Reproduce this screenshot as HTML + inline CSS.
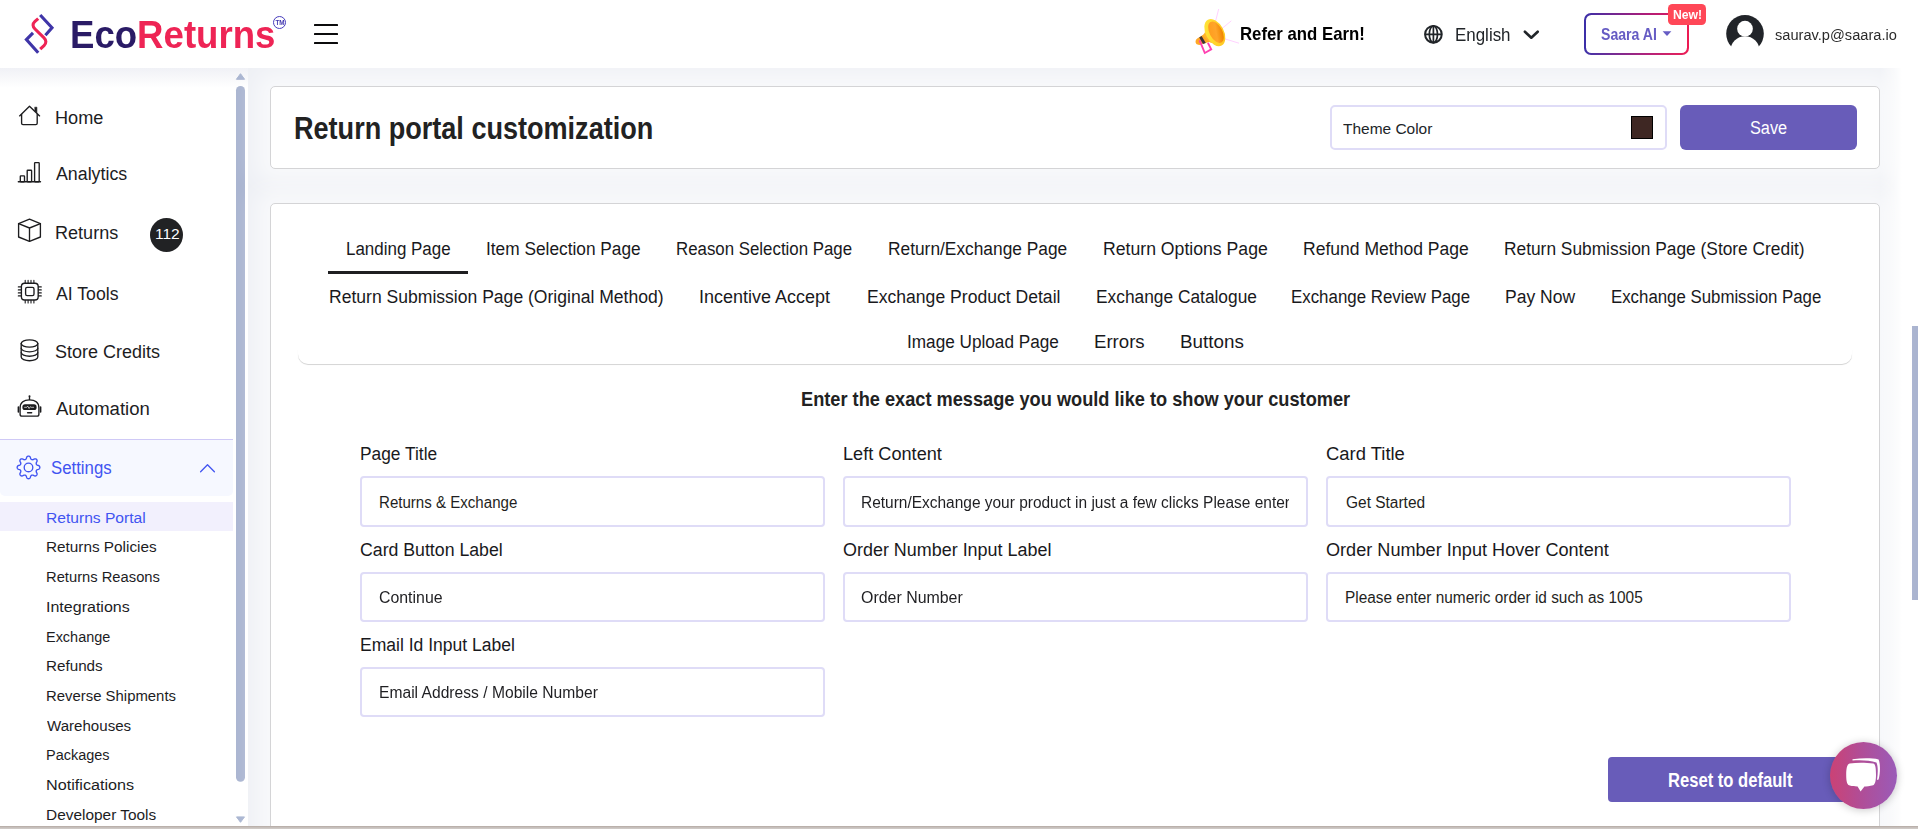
<!DOCTYPE html><html lang="en"><head><meta charset="utf-8"><title>EcoReturns</title><style>
*{margin:0;padding:0;box-sizing:border-box}
html,body{width:1918px;height:829px;overflow:hidden;background:#fff;font-family:"Liberation Sans", sans-serif;}
.a{position:absolute}
.t{position:absolute;white-space:nowrap;line-height:1;transform-origin:0 0;}
#main{left:248px;top:68px;width:1670px;height:761px;background:#eef0f5}
.card{background:#fff;border:1px solid #d4d4d6;border-radius:5px;box-shadow:0 0 22px 14px rgba(255,255,255,.6)}
.inp{border:2px solid #dfdcf7;border-radius:4px;background:#fff;height:50px;width:465px}
</style></head><body><div id="root" style="position:relative;width:1918px;height:829px;overflow:hidden">
<div id="main" class="a"></div>
<div class="a" style="left:1880px;top:68px;width:38px;height:761px;background:linear-gradient(90deg,rgba(255,255,255,0),#fff 58%)"></div>
<div class="a" style="left:1912.4px;top:325.6px;width:6px;height:274.7px;background:#aab4d0"></div>
<div class="a" style="left:0;top:68px;width:248px;height:761px;background:#fff"></div>
<div class="a" style="left:0;top:68px;width:248px;height:20px;background:linear-gradient(#f0f1f6,#fff)"></div>
<svg class="a" style="left:234px;top:70px" width="14" height="758" viewBox="234 70 14 758"><path d="M240.5 73.7 L244.6 79.3 L236.4 79.3 Z" fill="#a9b5d1" stroke="#a9b5d1" stroke-width="1" stroke-linejoin="round"/><rect x="236" y="86" width="9" height="695.8" rx="4.5" fill="#aab5d1"/><path d="M236.5 816.9 L244.5 816.9 L240.5 822.3 Z" fill="#a9b5d1" stroke="#a9b5d1" stroke-width="1" stroke-linejoin="round"/></svg>
<div class="a" style="left:0;top:439px;width:233px;height:1px;background:#cfc9f6"></div>
<div class="a" style="left:0;top:440px;width:233px;height:56px;background:#f6f8ff;border-radius:0 0 5px 5px"></div>
<div class="a" style="left:0;top:502px;width:233px;height:29px;background:#f2f0fd"></div>
<svg class="a" style="left:0;top:68px" width="234" height="440" viewBox="0 68 234 440" fill="none" stroke="#1d1d1f" stroke-width="1.35" stroke-linecap="round" stroke-linejoin="round">
<path d="M19.6 115.9 L29.5 106.2 L39.6 115.9"/><path d="M21.6 114.3 V123.2 Q21.6 124.6 23 124.6 H35.8 Q37.2 124.6 37.2 123.2 V114.3"/><path d="M35 107.2 h1.9 v5.6 l-1.9 -1.9 Z" fill="#1d1d1f" stroke-width="0.6"/>
<path d="M18.3 181.7 H40.5"/><rect x="20.3" y="175.9" width="4.2" height="5.8" rx="0.6"/><rect x="27.2" y="170.2" width="4.4" height="11.5" rx="0.6"/><rect x="34.6" y="162.6" width="4.6" height="19.1" rx="0.6"/>
<path d="M29.5 219.2 L40.4 223.6 V237 L29.5 241.3 L18.6 237 V223.6 Z"/><path d="M18.6 223.6 L29.5 228 L40.4 223.6 M29.5 228 V241.3"/>
<rect x="21.4" y="283.2" width="16.8" height="16.8" rx="3.2"/><rect x="25.6" y="287.3" width="8.4" height="8.4" rx="1.6"/>
<path d="M25.2 280.2 V283 M25.2 300.2 V303 M28.1 280.2 V283 M28.1 300.2 V303 M31.0 280.2 V283 M31.0 300.2 V303 M33.9 280.2 V283 M33.9 300.2 V303 M18.3 286.9 H21.2 M38.4 286.9 H41.3 M18.3 289.9 H21.2 M38.4 289.9 H41.3 M18.3 292.9 H21.2 M38.4 292.9 H41.3 M18.3 295.9 H21.2 M38.4 295.9 H41.3 " stroke-width="1.1"/>
<ellipse cx="29.5" cy="343.5" rx="8.3" ry="3.6"/><path d="M21.2 343.5 V357 C21.2 359 24.9 360.7 29.5 360.7 S37.8 359 37.8 357 V343.5"/><path d="M21.2 348.2 C21.2 350.2 24.9 351.8 29.5 351.8 S37.8 350.2 37.8 348.2 M21.2 352.6 C21.2 354.6 24.9 356.2 29.5 356.2 S37.8 354.6 37.8 352.6"/>
<circle cx="29.5" cy="396.3" r="1" fill="#1d1d1f" stroke="none"/><path d="M29.5 397 V399.6"/><path d="M20.1 414.2 V408 C20.1 402.6 24 399.8 29.5 399.8 S38.9 402.6 38.9 408 V414.2 Q38.9 416.1 37 416.1 H22 Q20.1 416.1 20.1 414.2 Z"/><rect x="22.4" y="404.3" width="14.2" height="5.8" rx="2.6" fill="#1d1d1f" stroke="none"/><path d="M24.6 407.3 h2.2 l0.9 -1.2 l1.4 2.4 l1.2 -1.8 l0.8 0.6 h2.6" stroke="#fff" stroke-width="0.7"/><path d="M27.6 412.7 H31.6" stroke-width="1.5"/><path d="M18.4 407 V412 M40.6 407 V412" stroke-width="1.6"/>
<path d="M28.50 456.05 L28.94 456.10 L29.38 456.26 L29.79 456.52 L30.16 456.91 L30.43 457.69 L30.64 458.47 L30.90 458.89 L31.16 459.20 L31.44 459.43 L31.73 459.59 L32.06 459.69 L32.41 459.72 L32.82 459.68 L33.30 459.57 L34.00 459.17 L34.74 458.81 L35.28 458.80 L35.76 458.90 L36.18 459.10 L36.53 459.37 L36.80 459.72 L37.00 460.14 L37.10 460.62 L37.09 461.16 L36.73 461.90 L36.33 462.60 L36.22 463.08 L36.18 463.49 L36.21 463.84 L36.31 464.17 L36.47 464.46 L36.70 464.74 L37.01 465.00 L37.43 465.26 L38.21 465.47 L38.99 465.74 L39.38 466.11 L39.64 466.52 L39.80 466.96 L39.85 467.40 L39.80 467.84 L39.64 468.28 L39.38 468.69 L38.99 469.06 L38.21 469.33 L37.43 469.54 L37.01 469.80 L36.70 470.06 L36.47 470.34 L36.31 470.63 L36.21 470.96 L36.18 471.31 L36.22 471.72 L36.33 472.20 L36.73 472.90 L37.09 473.64 L37.10 474.18 L37.00 474.66 L36.80 475.08 L36.53 475.43 L36.18 475.70 L35.76 475.90 L35.28 476.00 L34.74 475.99 L34.00 475.63 L33.30 475.23 L32.82 475.12 L32.41 475.08 L32.06 475.11 L31.73 475.21 L31.44 475.37 L31.16 475.60 L30.90 475.91 L30.64 476.33 L30.43 477.11 L30.16 477.89 L29.79 478.28 L29.38 478.54 L28.94 478.70 L28.50 478.75 L28.06 478.70 L27.62 478.54 L27.21 478.28 L26.84 477.89 L26.57 477.11 L26.36 476.33 L26.10 475.91 L25.84 475.60 L25.56 475.37 L25.27 475.21 L24.94 475.11 L24.59 475.08 L24.18 475.12 L23.70 475.23 L23.00 475.63 L22.26 475.99 L21.72 476.00 L21.24 475.90 L20.82 475.70 L20.47 475.43 L20.20 475.08 L20.00 474.66 L19.90 474.18 L19.91 473.64 L20.27 472.90 L20.67 472.20 L20.78 471.72 L20.82 471.31 L20.79 470.96 L20.69 470.63 L20.53 470.34 L20.30 470.06 L19.99 469.80 L19.57 469.54 L18.79 469.33 L18.01 469.06 L17.62 468.69 L17.36 468.28 L17.20 467.84 L17.15 467.40 L17.20 466.96 L17.36 466.52 L17.62 466.11 L18.01 465.74 L18.79 465.47 L19.57 465.26 L19.99 465.00 L20.30 464.74 L20.53 464.46 L20.69 464.17 L20.79 463.84 L20.82 463.49 L20.78 463.08 L20.67 462.60 L20.27 461.90 L19.91 461.16 L19.90 460.62 L20.00 460.14 L20.20 459.72 L20.47 459.37 L20.82 459.10 L21.24 458.90 L21.72 458.80 L22.26 458.81 L23.00 459.17 L23.70 459.57 L24.18 459.68 L24.59 459.72 L24.94 459.69 L25.27 459.59 L25.56 459.43 L25.84 459.20 L26.10 458.89 L26.36 458.47 L26.57 457.69 L26.84 456.91 L27.21 456.52 L27.62 456.26 L28.06 456.10 Z" stroke="#4154f1" stroke-width="1.35"/><circle cx="28.5" cy="467.4" r="4.3" stroke="#4154f1" stroke-width="1.35"/>
<path d="M200.6 471.8 L207.5 464.8 L214.4 471.8" stroke="#4154f1" stroke-width="1.3"/>
</svg>
<div class="a" style="left:150px;top:218px;width:33px;height:34px;border-radius:50%;background:#212224"></div>
<div class="a" style="left:0;top:0;width:1918px;height:68px;background:#fff"></div>
<svg class="a" style="left:16px;top:6px" width="60" height="56" viewBox="16 6 60 56" fill="none" stroke-width="3.1" stroke-linejoin="miter"><path d="M40.2 15 L52 27.8 L45.4 35.2" stroke="#3f35a8"/><path d="M33 32.8 L26.4 39.6 L38.2 52.8" stroke="#3f35a8"/><path d="M38.2 18.6 L35 21.4 C32.2 24 32.6 26.6 35 29 L43.8 37.6 C46.4 40.2 46.6 43 44 45.6 L40.2 49.2" stroke="#ee2455"/></svg>
<div class="a" style="left:272.5px;top:15.7px;width:13.6px;height:13.6px;border-radius:50%;border:1.2px solid #483dbd"></div>
<div class="a" style="left:314px;top:24px;width:24px;height:2px;background:#0b0b0c;border-radius:0.6px"></div>
<div class="a" style="left:314px;top:33px;width:24px;height:2px;background:#0b0b0c;border-radius:0.6px"></div>
<div class="a" style="left:314px;top:42px;width:24px;height:2px;background:#0b0b0c;border-radius:0.6px"></div>
<svg class="a" style="left:1185px;top:0" width="60" height="65" viewBox="1185 0 60 65"><defs><linearGradient id="mg1" x1="0" y1="0" x2="1" y2="1"><stop offset="0" stop-color="#ffe93b"/><stop offset="1" stop-color="#ffc21f"/></linearGradient><linearGradient id="mg2" x1="0" y1="0" x2="1" y2="0.6"><stop offset="0" stop-color="#ff9a1a"/><stop offset="0.6" stop-color="#ffa52a"/><stop offset="1" stop-color="#f08400"/></linearGradient></defs><path d="M1215.6 21.2 L1218.7 9 M1221.9 28.6 L1231.3 20.8 M1224.6 38.8 L1239 43.2" stroke="#ffd2ff" stroke-width="1" fill="none"/><path d="M1206 33 L1197.6 38.2 C1194.8 40 1195 43.6 1197.6 44.6 C1199.2 45.2 1200.6 44.8 1202 44 L1213 41 Z" fill="#ffa726"/><path d="M1199.2 37.4 L1201.6 36 L1205.8 43 L1203 44 Z" fill="#3a3238"/><path d="M1199.6 40.4 L1204.8 53 L1211.2 49.4 L1207.9 42.8" stroke="#ff3eb0" stroke-width="1.9" fill="none" stroke-linejoin="miter"/><path d="M1203 35.5 L1207.5 28 L1219 44.5 L1210 42.5 Z" fill="#ffb52e"/><ellipse cx="1214.8" cy="32.6" rx="9" ry="14.6" transform="rotate(-28 1214.8 32.6)" fill="url(#mg1)"/><ellipse cx="1216" cy="32.2" rx="6.4" ry="11.6" transform="rotate(-28 1216 32.2)" fill="url(#mg2)"/></svg>
<svg class="a" style="left:1422px;top:22px" width="24" height="24" viewBox="1422 22 24 24" fill="none" stroke="#212529" stroke-width="2"><circle cx="1433.4" cy="34.3" r="8.35"/><ellipse cx="1433.4" cy="34.3" rx="4.1" ry="8.35" stroke-width="1.7"/><path d="M1425 34.3 H1441.8 M1433.4 26 V42.6" stroke-width="1.7"/></svg>
<svg class="a" style="left:1520px;top:26px" width="24" height="18" viewBox="1520 26 24 18" fill="none" stroke="#212529" stroke-width="2.6" stroke-linecap="round" stroke-linejoin="round"><path d="M1524.9 31.7 L1531.3 37.7 L1537.7 31.7"/></svg>
<div class="a" style="left:1584px;top:13.4px;width:105px;height:41.2px;border-radius:7px;background:linear-gradient(90deg,#3a2fa8,#b01d78 60%,#ee1a52)"></div>
<div class="a" style="left:1585.8px;top:15.2px;width:101.4px;height:37.6px;border-radius:5.4px;background:#fff"></div>
<svg class="a" style="left:1660px;top:28px" width="14" height="10" viewBox="1660 28 14 10"><path d="M1662.6 31.3 H1671.4 L1667 35.9 Z" fill="#665cc4"/></svg>
<div class="a" style="left:1668px;top:4px;width:38px;height:20.6px;border-radius:4.5px;background:#ff4757"></div>
<svg class="a" style="left:1724px;top:12px" width="44" height="44" viewBox="1724 12 44 44"><defs><clipPath id="avc"><circle cx="1745" cy="33.8" r="18.8"/></clipPath></defs><circle cx="1745" cy="33.8" r="18.8" fill="#212429"/><circle cx="1745" cy="28.7" r="7.85" fill="#fff"/><ellipse cx="1745" cy="50.9" rx="14.6" ry="14.7" fill="#fff"/></svg>
<div class="a card" style="left:270px;top:86px;width:1610px;height:83px"></div>
<div class="a card" style="left:270px;top:203px;width:1610px;height:640px"></div>
<div class="a" style="left:1330px;top:105px;width:337px;height:45px;border:2px solid #dfdcf7;border-radius:5px;background:#fff"></div>
<div class="a" style="left:1631px;top:116px;width:22px;height:23px;background:#3e2723;border:1px solid #000"></div>
<div class="a" style="left:1680px;top:105px;width:177px;height:45px;border-radius:6px;background:#685cb9"></div>
<div class="a" style="left:298px;top:222px;width:1554px;height:142.4px;border-radius:10px;background:#fff;box-shadow:0 1px 0.7px rgba(0,0,0,.17)"></div>
<div class="a" style="left:296px;top:210px;width:1558px;height:140px;background:#fff"></div>
<div class="a" style="left:328px;top:271px;width:140px;height:3px;background:#1f1f21"></div>
<div class="a inp" style="left:360px;top:476px;height:51px;width:465px"></div>
<div class="a inp" style="left:843px;top:476px;height:51px;width:465px"></div>
<div class="a inp" style="left:1326px;top:476px;height:51px;width:465px"></div>
<div class="a inp" style="left:360px;top:572px;height:50px;width:465px"></div>
<div class="a inp" style="left:843px;top:572px;height:50px;width:465px"></div>
<div class="a inp" style="left:1326px;top:572px;height:50px;width:465px"></div>
<div class="a inp" style="left:360px;top:667px;height:50px;width:465px"></div>
<div class="a" style="left:1608px;top:757px;width:249px;height:45px;border-radius:4px;background:#685cb9"></div>
<div class="a" style="left:1830px;top:742px;width:67px;height:67px;border-radius:50%;background:linear-gradient(90deg,#cb4275,#b14d96 45%,#9a5bb8);box-shadow:0 1px 8px rgba(0,0,0,.22)"></div>
<svg class="a" style="left:1840px;top:752px" width="48" height="46" viewBox="1840 752 48 46"><path d="M1852.5 759.2 C1862 758 1872 758 1878.6 759.4 C1880.2 763 1880.6 772 1878.6 779.4 L1877 780 C1878.2 772 1878 766 1876.4 762.6 C1870 760.4 1861 760 1852.5 760.6 Z" fill="#fff"/><path d="M1849.6 763.4 C1857 762.4 1866 762.4 1873.2 763.6 C1875.6 764 1876 769 1876 774.6 C1876 780 1875.4 784.4 1873.2 785.2 C1870 786.2 1866 786.4 1864.4 786.4 L1860.6 791.4 L1857.6 786.4 C1854 786.4 1851 786 1849 785.2 C1846.6 784.2 1846.2 779 1846.2 774.4 C1846.2 769.4 1846.8 764 1849.6 763.4 Z" fill="#fff"/></svg>
<div class="a" style="left:0;top:826px;width:1918px;height:3px;background:linear-gradient(#b4a9a3,#c6bfbb 50%,#d2cdca)"></div>
<div class="a" id="hdrtxt" style="left:0;top:0;width:1918px;height:68px;will-change:transform">
<div class="t" id="t0" style="left:69.52px;top:16.00px;font-size:38.8px;font-weight:700;color:#2a1b66;transform:scaleX(0.9433);">Eco<span style="color:#ee2455">Returns</span></div>
<div class="t" id="t1" style="left:1240.02px;top:24.00px;font-size:19px;font-weight:700;color:#000;transform:scaleX(0.8828);">Refer and Earn!</div>
<div class="t" id="t2" style="left:1454.54px;top:26.00px;font-size:18px;font-weight:400;color:#212529;transform:scaleX(0.9405);">English</div>
<div class="t" id="t3" style="left:1600.80px;top:27.00px;font-size:16px;font-weight:700;color:#665cc4;transform:scaleX(0.8794);">Saara AI</div>
<div class="t" id="t4" style="left:1673.38px;top:9.00px;font-size:12.8px;font-weight:700;color:#fff;transform:scaleX(0.9525);">New!</div>
<div class="t" id="t5" style="left:1774.70px;top:27.00px;font-size:15.4px;font-weight:400;color:#2b2b2b;transform:scaleX(0.9500);">saurav.p@saara.io</div>
<div class="t" id="t6" style="left:275.50px;top:20.00px;font-size:6.3px;font-weight:700;color:#4338b0;transform:scaleX(1.0000);">TM</div>
</div>
<div class="t" id="t7" style="left:55.49px;top:110.00px;font-size:17.6px;font-weight:400;color:#1d1d1f;transform:scaleX(1.0306);">Home</div>
<div class="t" id="t8" style="left:55.50px;top:166.00px;font-size:17.6px;font-weight:400;color:#1d1d1f;transform:scaleX(1.0114);">Analytics</div>
<div class="t" id="t9" style="left:55.47px;top:225.00px;font-size:17.6px;font-weight:400;color:#1d1d1f;transform:scaleX(1.0267);">Returns</div>
<div class="t" id="t10" style="left:55.50px;top:286.00px;font-size:17.6px;font-weight:400;color:#1d1d1f;transform:scaleX(1.0033);">AI Tools</div>
<div class="t" id="t11" style="left:55.48px;top:344.00px;font-size:17.6px;font-weight:400;color:#1d1d1f;transform:scaleX(1.0238);">Store Credits</div>
<div class="t" id="t12" style="left:55.50px;top:401.00px;font-size:17.6px;font-weight:400;color:#1d1d1f;transform:scaleX(1.0545);">Automation</div>
<div class="t" id="t13" style="left:154.87px;top:227.00px;font-size:14.4px;font-weight:400;color:#fff;transform:scaleX(1.0787);">112</div>
<div class="t" id="t14" style="left:50.75px;top:460.00px;font-size:17.6px;font-weight:400;color:#4154f1;transform:scaleX(0.9532);">Settings</div>
<div class="t" id="t15" style="left:45.67px;top:510.00px;font-size:15.2px;font-weight:400;color:#4154f1;transform:scaleX(1.0271);">Returns Portal</div>
<div class="t" id="t16" style="left:45.70px;top:539.00px;font-size:15.2px;font-weight:400;color:#1d1d1f;transform:scaleX(1.0083);">Returns Policies</div>
<div class="t" id="t17" style="left:45.72px;top:569.00px;font-size:15.2px;font-weight:400;color:#1d1d1f;transform:scaleX(0.9707);">Returns Reasons</div>
<div class="t" id="t18" style="left:45.64px;top:599.00px;font-size:15.2px;font-weight:400;color:#1d1d1f;transform:scaleX(1.0551);">Integrations</div>
<div class="t" id="t19" style="left:45.73px;top:629.00px;font-size:15.2px;font-weight:400;color:#1d1d1f;transform:scaleX(0.9516);">Exchange</div>
<div class="t" id="t20" style="left:45.70px;top:658.00px;font-size:15.2px;font-weight:400;color:#1d1d1f;transform:scaleX(1.0018);">Refunds</div>
<div class="t" id="t21" style="left:45.71px;top:688.00px;font-size:15.2px;font-weight:400;color:#1d1d1f;transform:scaleX(0.9809);">Reverse Shipments</div>
<div class="t" id="t22" style="left:46.70px;top:718.00px;font-size:15.2px;font-weight:400;color:#1d1d1f;transform:scaleX(0.9929);">Warehouses</div>
<div class="t" id="t23" style="left:45.75px;top:747.00px;font-size:15.2px;font-weight:400;color:#1d1d1f;transform:scaleX(0.9523);">Packages</div>
<div class="t" id="t24" style="left:45.63px;top:777.00px;font-size:15.2px;font-weight:400;color:#1d1d1f;transform:scaleX(1.0659);">Notifications</div>
<div class="t" id="t25" style="left:45.68px;top:807.00px;font-size:15.2px;font-weight:400;color:#1d1d1f;transform:scaleX(1.0150);">Developer Tools</div>
<div class="t" id="t26" style="left:293.73px;top:113.00px;font-size:30.6px;font-weight:700;color:#222;transform:scaleX(0.8844);">Return portal customization</div>
<div class="t" id="t27" style="left:1343.40px;top:121.00px;font-size:15.4px;font-weight:400;color:#212529;transform:scaleX(1.0045);">Theme Color</div>
<div class="t" id="t28" style="left:1749.80px;top:119.00px;font-size:18px;font-weight:400;color:#fff;transform:scaleX(0.9050);">Save</div>
<div class="t" id="t29" style="left:345.94px;top:241.00px;font-size:17.6px;font-weight:400;color:#19191c;transform:scaleX(0.9636);">Landing Page</div>
<div class="t" id="t30" style="left:486.12px;top:241.00px;font-size:17.6px;font-weight:400;color:#19191c;transform:scaleX(0.9821);">Item Selection Page</div>
<div class="t" id="t31" style="left:676.04px;top:241.00px;font-size:17.6px;font-weight:400;color:#19191c;transform:scaleX(0.9577);">Reason Selection Page</div>
<div class="t" id="t32" style="left:888.01px;top:241.00px;font-size:17.6px;font-weight:400;color:#19191c;transform:scaleX(0.9851);">Return/Exchange Page</div>
<div class="t" id="t33" style="left:1102.80px;top:241.00px;font-size:17.6px;font-weight:400;color:#19191c;transform:scaleX(1.0031);">Return Options Page</div>
<div class="t" id="t34" style="left:1302.80px;top:241.00px;font-size:17.6px;font-weight:400;color:#19191c;transform:scaleX(0.9970);">Refund Method Page</div>
<div class="t" id="t35" style="left:1503.81px;top:241.00px;font-size:17.6px;font-weight:400;color:#19191c;transform:scaleX(0.9852);">Return Submission Page (Store Credit)</div>
<div class="t" id="t36" style="left:328.51px;top:289.00px;font-size:17.6px;font-weight:400;color:#19191c;transform:scaleX(0.9976);">Return Submission Page (Original Method)</div>
<div class="t" id="t37" style="left:699.47px;top:289.00px;font-size:17.6px;font-weight:400;color:#19191c;transform:scaleX(1.0221);">Incentive Accept</div>
<div class="t" id="t38" style="left:866.50px;top:289.00px;font-size:17.6px;font-weight:400;color:#19191c;transform:scaleX(0.9990);">Exchange Product Detail</div>
<div class="t" id="t39" style="left:1096.02px;top:289.00px;font-size:17.6px;font-weight:400;color:#19191c;transform:scaleX(0.9852);">Exchange Catalogue</div>
<div class="t" id="t40" style="left:1290.54px;top:289.00px;font-size:17.6px;font-weight:400;color:#19191c;transform:scaleX(0.9589);">Exchange Review Page</div>
<div class="t" id="t41" style="left:1504.52px;top:289.00px;font-size:17.6px;font-weight:400;color:#19191c;transform:scaleX(0.9973);">Pay Now</div>
<div class="t" id="t42" style="left:1611.04px;top:289.00px;font-size:17.6px;font-weight:400;color:#19191c;transform:scaleX(0.9557);">Exchange Submission Page</div>
<div class="t" id="t43" style="left:906.53px;top:334.00px;font-size:17.6px;font-weight:400;color:#19191c;transform:scaleX(0.9766);">Image Upload Page</div>
<div class="t" id="t44" style="left:1093.96px;top:334.00px;font-size:17.6px;font-weight:400;color:#19191c;transform:scaleX(1.0578);">Errors</div>
<div class="t" id="t45" style="left:1179.83px;top:334.00px;font-size:17.6px;font-weight:400;color:#19191c;transform:scaleX(1.0690);">Buttons</div>
<div class="t" id="t46" style="left:800.81px;top:389.00px;font-size:20.4px;font-weight:700;color:#222;transform:scaleX(0.8925);">Enter the exact message you would like to show your customer</div>
<div class="t" id="t47" style="left:360.41px;top:446.00px;font-size:17.6px;font-weight:400;color:#19191c;transform:scaleX(0.9857);">Page Title</div>
<div class="t" id="t48" style="left:843.27px;top:446.00px;font-size:17.6px;font-weight:400;color:#19191c;transform:scaleX(1.0316);">Left Content</div>
<div class="t" id="t49" style="left:1326.27px;top:446.00px;font-size:17.6px;font-weight:400;color:#19191c;transform:scaleX(1.0474);">Card Title</div>
<div class="t" id="t50" style="left:360.39px;top:542.00px;font-size:17.6px;font-weight:400;color:#19191c;transform:scaleX(1.0064);">Card Button Label</div>
<div class="t" id="t51" style="left:843.28px;top:542.00px;font-size:17.6px;font-weight:400;color:#19191c;transform:scaleX(1.0197);">Order Number Input Label</div>
<div class="t" id="t52" style="left:1326.27px;top:542.00px;font-size:17.6px;font-weight:400;color:#19191c;transform:scaleX(1.0292);">Order Number Input Hover Content</div>
<div class="t" id="t53" style="left:360.41px;top:637.00px;font-size:17.6px;font-weight:400;color:#19191c;transform:scaleX(0.9961);">Email Id Input Label</div>
<div class="t" id="t54" style="left:378.83px;top:495.00px;font-size:15.6px;font-weight:400;color:#1f1f22;transform:scaleX(0.9669);">Returns &amp; Exchange</div>
<div class="a" style="left:0;top:0;width:1289.2px;height:829px;overflow:hidden"><div class="t" id="t55" style="left:860.51px;top:495.00px;font-size:15.6px;font-weight:400;color:#1f1f22;transform:scaleX(0.9917);">Return/Exchange your product in just a few clicks Please enter</div></div>
<div class="t" id="t56" style="left:1345.50px;top:495.00px;font-size:15.6px;font-weight:400;color:#1f1f22;transform:scaleX(0.9924);">Get Started</div>
<div class="t" id="t57" style="left:378.80px;top:590.00px;font-size:15.6px;font-weight:400;color:#1f1f22;transform:scaleX(1.0181);">Continue</div>
<div class="t" id="t58" style="left:860.50px;top:590.00px;font-size:15.6px;font-weight:400;color:#1f1f22;transform:scaleX(1.0212);">Order Number</div>
<div class="t" id="t59" style="left:1344.51px;top:590.00px;font-size:15.6px;font-weight:400;color:#1f1f22;transform:scaleX(0.9870);">Please enter numeric order id such as 1005</div>
<div class="t" id="t60" style="left:378.80px;top:685.00px;font-size:15.6px;font-weight:400;color:#1f1f22;transform:scaleX(1.0023);">Email Address / Mobile Number</div>
<div class="t" id="t61" style="left:1667.76px;top:770.00px;font-size:20px;font-weight:700;color:#fff;transform:scaleX(0.8296);">Reset to default</div>
</div></body></html>
